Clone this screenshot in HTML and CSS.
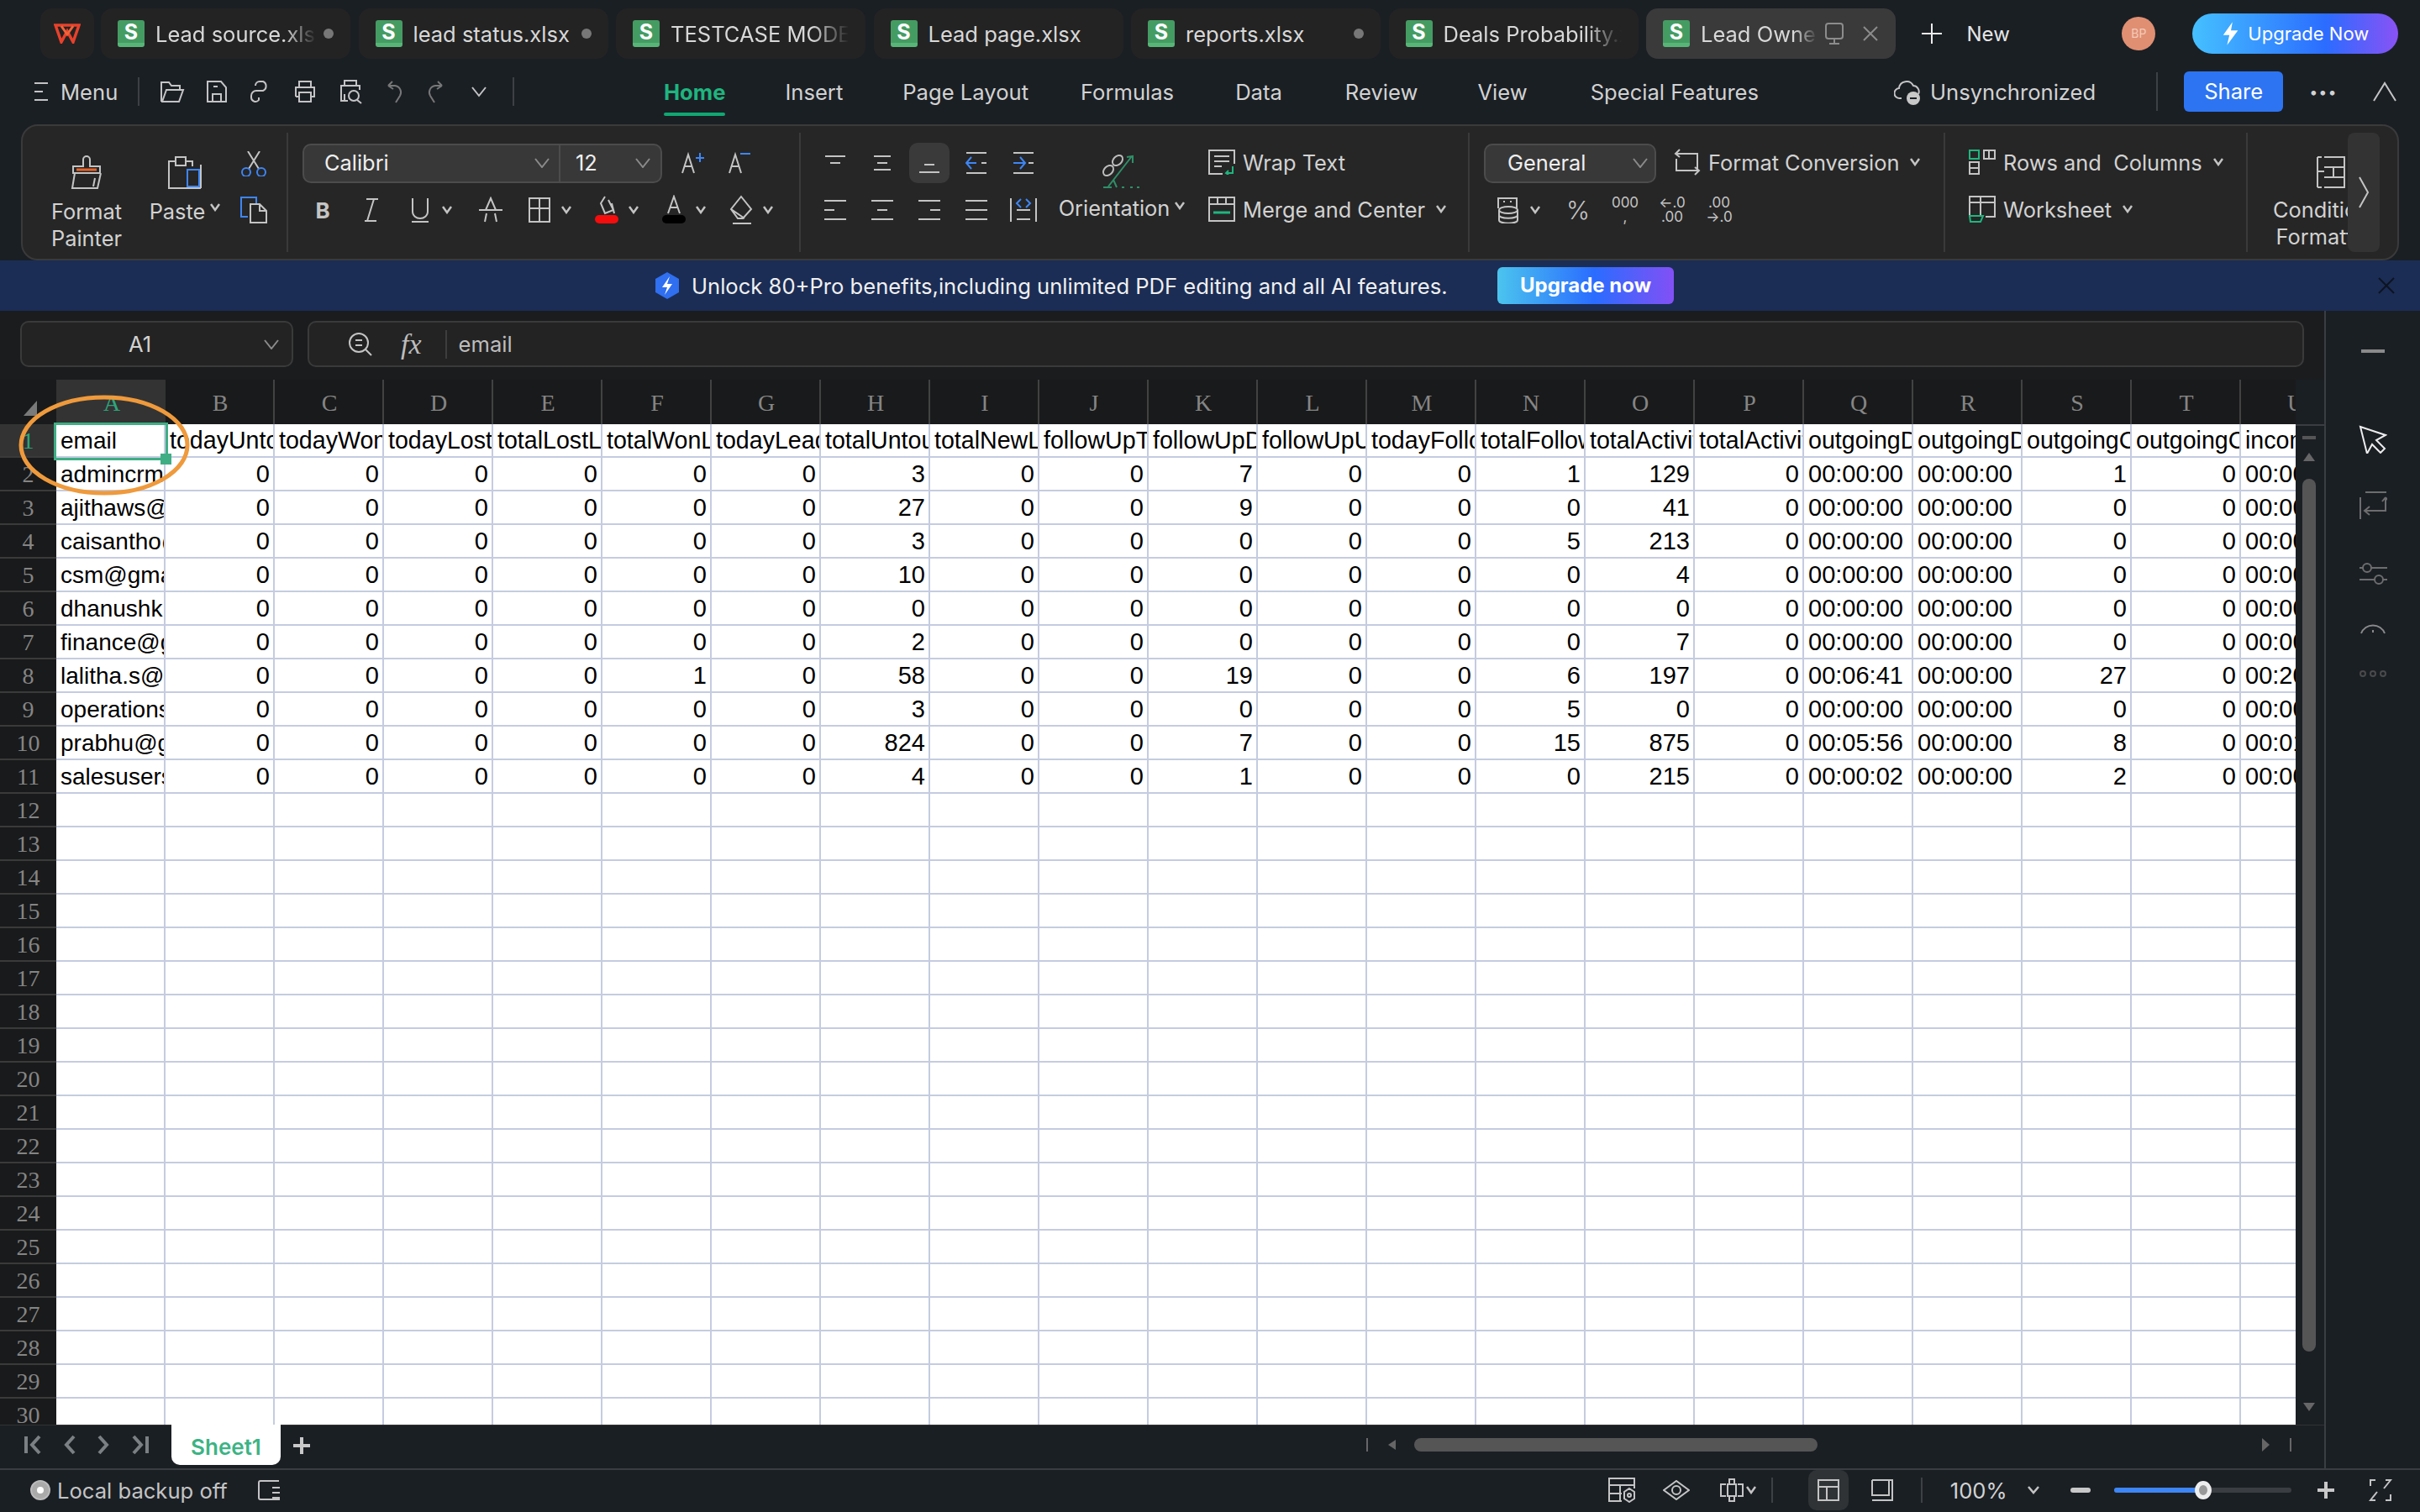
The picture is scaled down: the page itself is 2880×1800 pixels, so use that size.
FILE: index.html
```html
<!DOCTYPE html>
<html lang="en">

<head>
    <meta charset="utf-8">
    <title>Lead Owner.xlsx</title>
    <link rel="stylesheet" href="styles.css">
</head>

<body>

    <!-- file tabs -->
    <header class="tabbar">
        <div class="tab logo">
            <svg width="32" height="24" viewBox="0 0 32 24" fill="none"><path d="M2 2h28l-7 20-7-13-7 13z" stroke="#e8412b" stroke-width="3.5"/><path d="M9 3l7 10 7-10" stroke="#f0643a" stroke-width="3"/></svg>
        </div>
        <div class="tab"><span class="sicon">S</span><span class="tname fade">Lead source.xlsx</span><i class="dot"></i></div>
        <div class="tab"><span class="sicon">S</span><span class="tname">lead status.xlsx</span><i class="dot"></i></div>
        <div class="tab"><span class="sicon">S</span><span class="tname fade">TESTCASE MODEL</span></div>
        <div class="tab"><span class="sicon">S</span><span class="tname">Lead page.xlsx</span></div>
        <div class="tab"><span class="sicon">S</span><span class="tname">reports.xlsx</span><i class="dot"></i></div>
        <div class="tab"><span class="sicon">S</span><span class="tname fade">Deals Probability.xlsx</span></div>
        <div class="tab active">
            <span class="sicon">S</span><span class="tname fade">Lead Owner.xlsx</span>
            <svg class="ico dim" width="24" height="30" viewBox="0 0 24 30"><rect x="2" y="3" width="20" height="18" rx="3"/><path d="M12 21v5M6 27h12"/></svg>
            <svg class="ico dim closex" width="20" height="20" viewBox="0 0 20 20"><path d="M2 2l16 16M18 2L2 18"/></svg>
        </div>
        <div class="newtab">
            <svg class="ico bright" width="26" height="26" viewBox="0 0 26 26"><path d="M13 1v24M1 13h24"/></svg>
            <span>New</span>
        </div>
        <div class="avatar">BP</div>
        <div class="upgrade">
            <svg width="24" height="30" viewBox="0 0 26 30"><path d="M15 0L3 17h8l-3 13 14-19h-9z" fill="#fff"/></svg>
            <span>Upgrade Now</span>
        </div>
    </header>

    <!-- menu row -->
    <div class="menurow">
        <div class="quick">
            <svg class="ico" width="18" height="24" viewBox="0 0 18 24"><path d="M1 2h16M1 12h10M1 22h16"/></svg>
            <span class="menulabel">Menu</span>
            <i class="vsep"></i>
            <svg class="ico" width="30" height="28" viewBox="0 0 30 28"><path d="M2 26V3h9l3 4h10v5M2 26h21l5-14H8L3 26"/></svg>
            <svg class="ico" width="28" height="28" viewBox="0 0 28 28"><path d="M3 2h16l6 7v17H3zM9 26v-9h10v9M10 8h5"/></svg>
            <svg class="ico" width="28" height="28" viewBox="0 0 28 28"><path d="M12 13h5a6 6 0 000-11h-4a5 5 0 00-5 5M12 13H9a6 6 0 00-6 6v2a5 5 0 009 3v-3"/></svg>
            <svg class="ico" width="30" height="28" viewBox="0 0 30 28"><path d="M8 9V2h14v7M4 20V9h22v11h-4M8 20H4M8 15h14v11H8z"/></svg>
            <svg class="ico" width="32" height="30" viewBox="0 0 32 30"><path d="M8 8V2h14v6M12 26H4V8h22v5M8 18v8"/><circle cx="19" cy="20" r="6"/><path d="M23 25l5 4"/></svg>
            <svg class="ico faint" width="24" height="28" viewBox="0 0 24 28"><path d="M4 7l5-5M4 7l6 4M5 7h7a8 8 0 016 12l-5 8"/></svg>
            <svg class="ico faint" width="24" height="28" viewBox="0 0 24 28"><path d="M20 7l-5-5M20 7l-6 4M19 7h-7a8 8 0 00-6 12l5 8"/></svg>
            <svg class="ico qchev" width="20" height="14" viewBox="0 0 20 14"><path d="M2 2l8 10 8-10"/></svg>
            <i class="vsep qend"></i>
        </div>
        <nav class="ribbontabs">
            <span class="current">Home</span>
            <span>Insert</span>
            <span>Page Layout</span>
            <span>Formulas</span>
            <span>Data</span>
            <span>Review</span>
            <span>View</span>
            <span>Special Features</span>
        </nav>
        <div class="syncbox">
            <svg class="ico" width="34" height="36" viewBox="0 0 34 36"><path d="M9 26H7a6 6 0 01-1-12 9 9 0 0117-3 7 7 0 016 10"/><circle cx="23" cy="26" r="8" fill="#c8c8c8" stroke="none"/><path d="M19 26h8" stroke="#1a1f24"/></svg>
            <span>Unsynchronized</span>
            <i class="vsep tall"></i>
            <div class="share">Share</div>
            <span class="more">&bull;&bull;&bull;</span>
            <svg class="ico" width="30" height="26" viewBox="0 0 30 26"><path d="M2 24L15 3l13 21"/></svg>
        </div>
    </div>

    <!-- ribbon -->
    <section class="ribbon">
        <div class="group g1">
            <div class="bigbtn painter">
                <svg class="ico" width="40" height="42" viewBox="0 0 40 42"><path d="M16 14V6a4 4 0 018 0v8h12v8H4v-8zM6 22l-3 18h30l4-18M30 28l-2 10"/><path d="M8 18h24" stroke="#e8652a" stroke-width="3"/></svg>
                <span>Format<br>Painter</span>
            </div>
            <div class="bigbtn paste">
                <svg class="ico" width="42" height="42" viewBox="0 0 42 42"><path d="M14 40H2V8h8V3h12v5h8v6M10 8v5h12V8M14 40h26M40 40V12"/><rect x="24" y="18" width="14" height="20" stroke="#3e86f5"/></svg>
                <span class="withchev">Paste<svg class="chv" width="12" height="10" viewBox="0 0 12 10"><path d="M1 1l5 7 5-7"/></svg></span>
            </div>
            <div class="smallcol">
                <svg class="ico" width="34" height="30" viewBox="0 0 34 30"><path d="M10 0l13 21M24 0L11 21"/><g stroke="#3e86f5"><circle cx="8" cy="25" r="5"/><circle cx="26" cy="25" r="5"/></g></svg>
                <svg class="ico" width="34" height="32" viewBox="0 0 34 32"><path d="M10 24H2V1h18v8" stroke="#3e86f5"/><path d="M13 9h11l8 8v14H13zM24 9v8h8"/></svg>
            </div>
        </div>

        <div class="group g2">
            <div class="r1">
                <div class="combo fontcombo">
                    <span class="cname">Calibri</span>
                    <svg class="chvbig" width="18" height="12" viewBox="0 0 18 12"><path d="M1 1l8 10 8-10"/></svg>
                    <span class="csize">12</span>
                    <svg class="chvbig" width="18" height="12" viewBox="0 0 18 12"><path d="M1 1l8 10 8-10"/></svg>
                </div>
                <div class="aa">
                    <svg class="ico" width="30" height="28" viewBox="0 0 30 28"><path d="M2 26L9 4l7 22M5 18h8"/><path d="M18 8h10M23 2v11" stroke="#3e86f5"/></svg>
                    <svg class="ico" width="30" height="28" viewBox="0 0 30 28"><path d="M2 26L9 4l7 22M5 18h8"/><path d="M15 3h12" stroke="#3e86f5"/></svg>
                </div>
            </div>
            <div class="r2 fontrow">
                <span class="ib40 boldb">B</span>
                <svg class="ib40 ico" width="40" height="32" viewBox="0 0 40 32"><path d="M14 3h14M12 29h14M23 3l-8 26"/></svg>
                <div class="dd">
                    <svg class="ib40 ico" width="40" height="32" viewBox="0 0 40 32"><path d="M11 2v16a9 8 0 0018 0V2M10 30h20"/></svg>
                    <svg class="chv" width="12" height="10" viewBox="0 0 12 10"><path d="M1 1l5 7 5-7"/></svg>
                </div>
                <svg class="ib40 ico strike" width="40" height="32" viewBox="0 0 40 32"><path d="M14 16l6-14 6 14M13 30l2-10M27 30l-2-10M6 16h28"/></svg>
                <div class="dd">
                    <svg class="ib40 ico" width="40" height="32" viewBox="0 0 40 32"><path d="M8 2h24v28H8zM20 2v28M8 14h24"/></svg>
                    <svg class="chv" width="12" height="10" viewBox="0 0 12 10"><path d="M1 1l5 7 5-7"/></svg>
                </div>
                <div class="dd">
                    <svg class="ib40 ico" width="40" height="36" viewBox="0 0 40 36"><path d="M18 2l-5 8 5 12 10-4-6-12M26 10l3 12"/><rect x="6" y="24" width="28" height="10" rx="5" fill="#f50d0d" stroke="none"/></svg>
                    <svg class="chv" width="12" height="10" viewBox="0 0 12 10"><path d="M1 1l5 7 5-7"/></svg>
                </div>
                <div class="dd">
                    <svg class="ib40 ico" width="40" height="36" viewBox="0 0 40 36"><path d="M13 22l7-20 7 20M15 15h10"/><rect x="6" y="24" width="28" height="10" rx="5" fill="#000" stroke="none"/></svg>
                    <svg class="chv" width="12" height="10" viewBox="0 0 12 10"><path d="M1 1l5 7 5-7"/></svg>
                </div>
                <div class="dd">
                    <svg class="ib40 ico" width="40" height="36" viewBox="0 0 40 36"><path d="M20 2l12 15-10 11h-6L8 17zM8 17l16 11M10 34h22"/></svg>
                    <svg class="chv" width="12" height="10" viewBox="0 0 12 10"><path d="M1 1l5 7 5-7"/></svg>
                </div>
            </div>
        </div>

        <div class="group g3">
            <div class="aligngrid">
                <div class="ib"><svg class="ico" width="26" height="26" viewBox="0 0 26 26"><path d="M1 5h24M7 13h12"/></svg></div>
                <div class="ib"><svg class="ico" width="26" height="26" viewBox="0 0 26 26"><path d="M3 5h20M7 13h12M3 21h20"/></svg></div>
                <div class="ib on"><svg class="ico" width="26" height="26" viewBox="0 0 26 26"><path d="M7 15h12M1 24h24"/></svg></div>
                <div class="ib"><svg class="ico" width="28" height="28" viewBox="0 0 28 28"><path d="M2 2h24M2 26h24M20 14h6"/><path d="M14 14H2M8 7l-6 7 6 7" stroke="#3e86f5"/></svg></div>
                <div class="ib"><svg class="ico" width="28" height="28" viewBox="0 0 28 28"><path d="M2 2h24M2 26h24M20 14h6"/><path d="M2 14h14M10 7l6 7-6 7" stroke="#3e86f5"/></svg></div>
                <div class="ib"><svg class="ico" width="28" height="26" viewBox="0 0 28 26"><path d="M1 2h26M1 13h12M1 24h26"/></svg></div>
                <div class="ib"><svg class="ico" width="28" height="26" viewBox="0 0 28 26"><path d="M1 2h26M8 13h12M1 24h26"/></svg></div>
                <div class="ib"><svg class="ico" width="28" height="26" viewBox="0 0 28 26"><path d="M1 2h26M15 13h12M1 24h26"/></svg></div>
                <div class="ib"><svg class="ico" width="28" height="26" viewBox="0 0 28 26"><path d="M1 2h26M1 13h26M1 24h26"/></svg></div>
                <div class="ib"><svg class="ico" width="34" height="30" viewBox="0 0 34 30"><path d="M2 1v28M32 1v28M9 15h16M9 26h16"/><path d="M14 2l-5 5 5 5M20 2l5 5-5 5" stroke="#3e86f5"/></svg></div>
            </div>
            <div class="bigbtn orient">
                <svg width="48" height="44" viewBox="0 0 48 44" fill="none" stroke="#bdbdbd" stroke-width="2"><ellipse cx="19" cy="9" rx="5" ry="7" transform="rotate(45 19 9)"/><ellipse cx="8" cy="21" rx="5" ry="7" transform="rotate(45 8 21)"/><g stroke="#2f8f68"><path d="M8 40L36 4M30 5l7-1v8M2 41h10M14 32l4 9M24 41h3M34 41h3M42 41h3"/></g></svg>
                <span class="withchev">Orientation<svg class="chv" width="12" height="10" viewBox="0 0 12 10"><path d="M1 1l5 7 5-7"/></svg></span>
            </div>
            <div class="textcol">
                <div class="tbtn">
                    <svg class="ico" width="32" height="30" viewBox="0 0 32 30"><path d="M31 17V1H1v28h16M7 8h18M7 14h18M7 20h9"/><path d="M29 20v8h-8M24 25l-3 3 3 2" stroke="#1fb57f"/></svg>
                    <span>Wrap Text</span>
                </div>
                <div class="tbtn">
                    <svg class="ico" width="32" height="30" viewBox="0 0 32 30"><path d="M1 1h30v28H1zM1 9h30M11 1v8M21 1v8"/><path d="M6 19h20" stroke="#1fb57f" stroke-width="3"/></svg>
                    <span>Merge and Center</span>
                    <svg class="chv" width="12" height="10" viewBox="0 0 12 10"><path d="M1 1l5 7 5-7"/></svg>
                </div>
            </div>
        </div>

        <div class="group g4">
            <div class="r1">
                <div class="combo gencombo">
                    <span class="cname">General</span>
                    <svg class="chvbig" width="18" height="12" viewBox="0 0 18 12"><path d="M1 1l8 10 8-10"/></svg>
                </div>
                <div class="tbtn fconv">
                    <svg class="ico" width="32" height="32" viewBox="0 0 32 32"><path d="M7 1L2 6l5 4M2 6h26v20M25 31l5-5-5-4M30 26H3V12"/></svg>
                    <span>Format Conversion</span>
                    <svg class="chv" width="12" height="10" viewBox="0 0 12 10"><path d="M1 1l5 7 5-7"/></svg>
                </div>
            </div>
            <div class="r2 numrow">
                <div class="dd">
                    <svg class="ib40 ico" width="40" height="32" viewBox="0 0 40 32"><path d="M8 14V2h22v12M14 6h2M22 6h2"/><ellipse cx="20" cy="16" rx="11" ry="4"/><path d="M9 16v12c0 5 22 5 22 0V16M9 22c0 5 22 5 22 0"/></svg>
                    <svg class="chv" width="12" height="10" viewBox="0 0 12 10"><path d="M1 1l5 7 5-7"/></svg>
                </div>
                <span class="ib numglyph pct">%</span>
                <span class="ib numglyph thou">000<br>,</span>
                <span class="ib numglyph dec">&larr;.0<br>.00</span>
                <span class="ib numglyph dec">.00<br>&rarr;.0</span>
            </div>
        </div>

        <div class="group g5">
            <div class="tbtn">
                <svg class="ico" width="32" height="30" viewBox="0 0 32 30"><rect x="1" y="1" width="11" height="10" stroke="#1fb57f"/><path d="M18 1h13v10H18zM24 1v10M1 15h11v14H1zM1 22h11"/></svg>
                <span>Rows and&nbsp; Columns</span>
                <svg class="chv" width="12" height="10" viewBox="0 0 12 10"><path d="M1 1l5 7 5-7"/></svg>
            </div>
            <div class="tbtn">
                <svg class="ico" width="32" height="32" viewBox="0 0 32 32"><path d="M14 24H1V1h30v24H20M1 8h30M14 1v23"/><path d="M1 24h16l-3 7H2z" stroke="#1fb57f"/></svg>
                <span>Worksheet</span>
                <svg class="chv" width="12" height="10" viewBox="0 0 12 10"><path d="M1 1l5 7 5-7"/></svg>
            </div>
        </div>

        <div class="group g6">
            <div class="bigbtn condfmt">
                <svg class="ico condicon" width="34" height="38" viewBox="0 0 34 38"><path d="M9 1h24v36H9M9 13h24M9 25h24M20 13v12M1 1h5M1 37h5M1 1v36M1 18h8"/></svg>
                <span>Conditional<br>Formatting</span>
            </div>
            <div class="ribbonmore">
                <svg class="ico" width="14" height="40" viewBox="0 0 14 40"><path d="M2 2l10 18L2 38"/></svg>
            </div>
        </div>
    </section>

    <!-- promo banner -->
    <div class="promo">
        <svg width="30" height="32" viewBox="0 0 30 32"><path d="M15 0l14 8v16l-14 8-14-8V8z" fill="#2f6ff0"/><path d="M18 5L9 18h6l-3 9 9-13h-6z" fill="#fff"/></svg>
        <span class="promotext">Unlock 80+Pro benefits,including unlimited PDF editing and all AI features.</span>
        <span class="promobtn">Upgrade now</span>
        <svg class="promoclose" width="20" height="20" viewBox="0 0 20 20"><path d="M1 1l18 18M19 1L1 19" stroke="#0d1420" stroke-width="2"/></svg>
    </div>

    <div class="workspace">
        <div class="bookpane">

            <!-- name box + formula bar -->
            <div class="formularow">
                <div class="namebox">
                    <span>A1</span>
                    <svg class="chvbig" width="18" height="12" viewBox="0 0 18 12"><path d="M1 1l8 10 8-10"/></svg>
                </div>
                <div class="formulabox">
                    <svg class="ico" width="30" height="30" viewBox="0 0 30 30"><circle cx="13" cy="13" r="11"/><path d="M9 10h8M9 16h8M21 21l7 7"/></svg>
                    <span class="fx">fx</span>
                    <i class="fxsep"></i>
                    <span class="fval">email</span>
                </div>
            </div>

            <!-- column letters -->
            <div class="colhead">
                <div class="corner"><svg width="18" height="20" viewBox="0 0 18 20"><path d="M17 1v17a1 1 0 01-1 1H1z" fill="#7a7a7a"/></svg></div>
                <div class="letters">
                    <span class="sel">A</span><span>B</span><span>C</span><span>D</span><span>E</span><span>F</span><span>G</span><span>H</span><span>I</span><span>J</span><span>K</span><span>L</span><span>M</span><span>N</span><span>O</span><span>P</span><span>Q</span><span>R</span><span>S</span><span>T</span><span>U</span>
                </div>
                <div class="vsfill"></div>
            </div>

            <div class="sheetarea">
                <div class="rownums">
                    <span class="sel">1</span><span>2</span><span>3</span><span>4</span><span>5</span><span>6</span><span>7</span><span>8</span><span>9</span><span>10</span><span>11</span><span>12</span><span>13</span><span>14</span><span>15</span><span>16</span><span>17</span><span>18</span><span>19</span><span>20</span><span>21</span><span>22</span><span>23</span><span>24</span><span>25</span><span>26</span><span>27</span><span>28</span><span>29</span><span>30</span>
                </div>

                <div class="cells">
                    <table>
                        <tr class="heads"><td>email</td><td>todayUntouched</td><td>todayWonLeads</td><td>todayLostLeads</td><td>totalLostLeads</td><td>totalWonLeads</td><td>todayLeads</td><td>totalUntouched</td><td>totalNewLeads</td><td>followUpToday</td><td>followUpDone</td><td>followUpUpcoming</td><td>todayFollowUp</td><td>totalFollowUp</td><td>totalActivities</td><td>totalActivities</td><td>outgoingDuration</td><td>outgoingDuration</td><td>outgoingCount</td><td>outgoingCount</td><td>incoming</td></tr>
                        <tr><td class="l">admincrm@gmail.com</td><td>0</td><td>0</td><td>0</td><td>0</td><td>0</td><td>0</td><td>3</td><td>0</td><td>0</td><td>7</td><td>0</td><td>0</td><td>1</td><td>129</td><td>0</td><td class="l">00:00:00</td><td class="l">00:00:00</td><td>1</td><td>0</td><td class="l">00:00:00</td></tr>
                        <tr><td class="l">ajithaws@gmail.com</td><td>0</td><td>0</td><td>0</td><td>0</td><td>0</td><td>0</td><td>27</td><td>0</td><td>0</td><td>9</td><td>0</td><td>0</td><td>0</td><td>41</td><td>0</td><td class="l">00:00:00</td><td class="l">00:00:00</td><td>0</td><td>0</td><td class="l">00:00:00</td></tr>
                        <tr><td class="l">caisantho@gmail.com</td><td>0</td><td>0</td><td>0</td><td>0</td><td>0</td><td>0</td><td>3</td><td>0</td><td>0</td><td>0</td><td>0</td><td>0</td><td>5</td><td>213</td><td>0</td><td class="l">00:00:00</td><td class="l">00:00:00</td><td>0</td><td>0</td><td class="l">00:00:00</td></tr>
                        <tr><td class="l">csm@gmail.com</td><td>0</td><td>0</td><td>0</td><td>0</td><td>0</td><td>0</td><td>10</td><td>0</td><td>0</td><td>0</td><td>0</td><td>0</td><td>0</td><td>4</td><td>0</td><td class="l">00:00:00</td><td class="l">00:00:00</td><td>0</td><td>0</td><td class="l">00:00:00</td></tr>
                        <tr><td class="l">dhanushk@gmail.com</td><td>0</td><td>0</td><td>0</td><td>0</td><td>0</td><td>0</td><td>0</td><td>0</td><td>0</td><td>0</td><td>0</td><td>0</td><td>0</td><td>0</td><td>0</td><td class="l">00:00:00</td><td class="l">00:00:00</td><td>0</td><td>0</td><td class="l">00:00:00</td></tr>
                        <tr><td class="l">finance@gmail.com</td><td>0</td><td>0</td><td>0</td><td>0</td><td>0</td><td>0</td><td>2</td><td>0</td><td>0</td><td>0</td><td>0</td><td>0</td><td>0</td><td>7</td><td>0</td><td class="l">00:00:00</td><td class="l">00:00:00</td><td>0</td><td>0</td><td class="l">00:00:00</td></tr>
                        <tr><td class="l">lalitha.s@gmail.com</td><td>0</td><td>0</td><td>0</td><td>0</td><td>1</td><td>0</td><td>58</td><td>0</td><td>0</td><td>19</td><td>0</td><td>0</td><td>6</td><td>197</td><td>0</td><td class="l">00:06:41</td><td class="l">00:00:00</td><td>27</td><td>0</td><td class="l">00:20:00</td></tr>
                        <tr><td class="l">operations@gmail.com</td><td>0</td><td>0</td><td>0</td><td>0</td><td>0</td><td>0</td><td>3</td><td>0</td><td>0</td><td>0</td><td>0</td><td>0</td><td>5</td><td>0</td><td>0</td><td class="l">00:00:00</td><td class="l">00:00:00</td><td>0</td><td>0</td><td class="l">00:00:00</td></tr>
                        <tr><td class="l">prabhu@gmail.com</td><td>0</td><td>0</td><td>0</td><td>0</td><td>0</td><td>0</td><td>824</td><td>0</td><td>0</td><td>7</td><td>0</td><td>0</td><td>15</td><td>875</td><td>0</td><td class="l">00:05:56</td><td class="l">00:00:00</td><td>8</td><td>0</td><td class="l">00:01:00</td></tr>
                        <tr><td class="l">salesusers@gmail.com</td><td>0</td><td>0</td><td>0</td><td>0</td><td>0</td><td>0</td><td>4</td><td>0</td><td>0</td><td>1</td><td>0</td><td>0</td><td>0</td><td>215</td><td>0</td><td class="l">00:00:02</td><td class="l">00:00:00</td><td>2</td><td>0</td><td class="l">00:00:00</td></tr>
                    </table>
                    <div class="emptyrows"></div>
                </div>

                <div class="vscroll">
                    <i class="vs-dash"></i>
                    <i class="vs-up"></i>
                    <i class="vs-thumb"></i>
                    <i class="vs-down"></i>
                </div>

                <!-- A1 cursor and the hand-drawn ring sit on top of the grid -->
                <div class="cursor"><i class="handle"></i></div>
                <svg class="ring" width="206" height="122" viewBox="0 0 206 122" fill="none"><ellipse cx="103" cy="61" rx="99" ry="57" stroke="#ef9a3c" stroke-width="5"/></svg>
            </div>

            <!-- sheet tabs -->
            <div class="sheetbar">
                <div class="sheetnav">
                    <svg width="22" height="24" viewBox="0 0 22 24" fill="none" stroke="#7b8085" stroke-width="4"><path d="M3 2v20M19 2l-9 10 9 10"/></svg>
                    <svg width="14" height="24" viewBox="0 0 14 24" fill="none" stroke="#7b8085" stroke-width="4"><path d="M12 2l-9 10 9 10"/></svg>
                    <svg width="14" height="24" viewBox="0 0 14 24" fill="none" stroke="#7b8085" stroke-width="4"><path d="M2 2l9 10-9 10"/></svg>
                    <svg width="22" height="24" viewBox="0 0 22 24" fill="none" stroke="#7b8085" stroke-width="4"><path d="M19 2v20M3 2l9 10-9 10"/></svg>
                </div>
                <div class="sheettab">Sheet1</div>
                <svg class="addsheet" width="24" height="24" viewBox="0 0 24 24" fill="none" stroke="#c8c8c8" stroke-width="4"><path d="M12 2v20M2 12h20"/></svg>
                <div class="hscroll">
                    <i class="hs-bar"></i>
                    <i class="hs-left"></i>
                    <i class="hs-thumb"></i>
                    <i class="hs-right"></i>
                    <i class="hs-bar"></i>
                </div>
            </div>
        </div>

        <!-- right side rail -->
        <aside class="rail">
            <i class="railminus"></i>
            <svg class="ico bright" width="34" height="34" viewBox="0 0 34 34"><path d="M2 2l30 10-11 6 10 10-5 5-10-10-6 11z"/></svg>
            <svg class="ico railfaint" width="34" height="34" viewBox="0 0 34 34"><path d="M8 2h25M2 8v26M32 8v16H8M13 19l-6 5 6 5M32 8l-4 5M32 8l4 5"/></svg>
            <svg class="ico railfaint sliders" width="34" height="28" viewBox="0 0 34 28"><circle cx="10" cy="7" r="5"/><circle cx="24" cy="21" r="5"/><path d="M15 7h19M1 7h4M1 21h18M29 21h5"/></svg>
            <svg class="ico railarc" width="30" height="12" viewBox="0 0 30 12"><path d="M1 11a15 15 0 0128 0M15 7v3"/></svg>
            <svg class="ico raildots" width="34" height="10" viewBox="0 0 34 10"><circle cx="5" cy="5" r="3"/><circle cx="17" cy="5" r="3"/><circle cx="29" cy="5" r="3"/></svg>
        </aside>
    </div>

    <!-- status bar -->
    <footer class="statusbar">
        <div class="radio"><i></i></div>
        <span class="backup">Local backup off</span>
        <svg class="ico docicon" width="26" height="24" viewBox="0 0 26 24"><path d="M25 1H3a2 2 0 00-2 2v18a2 2 0 002 2h24M17 9h9M17 15h9M17 21h9"/></svg>
        <div class="statusright">
            <svg class="ico" width="32" height="30" viewBox="0 0 32 30"><path d="M16 28H1V1h30v12M1 9h30M1 19h15M14 9v19"/><path d="M25 13l6 4v8l-6 4-6-4v-8z"/><circle cx="25" cy="21" r="2"/></svg>
            <svg class="ico" width="32" height="24" viewBox="0 0 32 24"><path d="M1 12L16 1l15 11-15 11z"/><circle cx="16" cy="12" r="5"/></svg>
            <div class="splitview">
                <svg class="ico" width="28" height="28" viewBox="0 0 28 28"><path d="M11 7V1h6v6M11 21v6h6v-6M7 7H1v14h6M21 7h6v14h-6M9 7h10v14H9z"/></svg>
                <svg class="chv" width="12" height="10" viewBox="0 0 12 10"><path d="M1 1l5 7 5-7"/></svg>
            </div>
            <i class="vsep short"></i>
            <div class="viewbtn on"><svg class="ico" width="28" height="26" viewBox="0 0 28 26"><path d="M2 1h24v24H2zM2 9h24M12 9v16"/></svg></div>
            <div class="viewbtn"><svg class="ico" width="28" height="26" viewBox="0 0 28 26"><path d="M2 1h24v24H2M2 1v18h20V1"/></svg></div>
            <i class="vsep short"></i>
            <span class="zoomval">100%</span>
            <svg class="chv zoomchv" width="14" height="10" viewBox="0 0 14 10"><path d="M1 1l6 7 6-7"/></svg>
            <i class="zminus"></i>
            <div class="slider"><i class="sl-blue"></i><i class="sl-knob"></i></div>
            <svg class="zplus" width="22" height="22" viewBox="0 0 22 22" fill="none" stroke="#c8c8c8" stroke-width="4"><path d="M11 1v20M1 11h20"/></svg>
            <svg class="ico fitscreen" width="28" height="28" viewBox="0 0 28 28"><path d="M2 9V2h6M26 19v7h-6M20 2h6l-8 10M8 26H2l8-10"/></svg>
        </div>
    </footer>

</body>

</html>
```

FILE: styles.css
```css
* {
    box-sizing: border-box;
}

html, body {
    margin: 0;
    padding: 0;
}

body {
    width: 2880px;
    height: 1800px;
    overflow: hidden;
    display: flex;
    flex-direction: column;
    background-color: #1a1f24;
    color: #d2d2d2;
    font-family: "Inter", "Liberation Sans", sans-serif;
    font-size: 25.6px;
}

i {
    display: block;
}

.ico {
    fill: none;
    stroke: #c4c4c4;
    stroke-width: 2;
    flex: none;
}

.ico.dim {
    stroke: #8c8c8c;
}

.ico.faint {
    stroke: #777;
}

.ico.bright {
    stroke: #ececec;
}

.chv,
.chvbig {
    fill: none;
    flex: none;
}

.chv {
    stroke: #c4c4c4;
    stroke-width: 2.5;
}

.chvbig {
    stroke: #8b8b8b;
    stroke-width: 2;
}

/* file tabs */
.tabbar {
    height: 80px;
    flex: none;
    display: flex;
    align-items: flex-start;
    padding: 10px 0 0 48px;
    gap: 9.5px;
}

.tab {
    width: 297px;
    height: 60px;
    flex: none;
    border-radius: 14px;
    background-color: #232323;
    display: flex;
    align-items: center;
    padding: 0 20px;
    white-space: nowrap;
    color: #d8d8d8;
    font-size: 25.5px;
}

.tab.logo {
    width: 64px;
    margin-right: -1.5px;
    justify-content: center;
    padding: 0;
}

.tab.active {
    background-color: #3a3a3a;
}

.sicon {
    width: 32px;
    height: 32px;
    flex: none;
    border-radius: 3px;
    background: linear-gradient(#459c63 85%, #57b578 85%);
    color: #fff;
    font-weight: 700;
    font-size: 25px;
    line-height: 28px;
    text-align: center;
    margin-right: 13px;
}

.tname {
    flex: 1;
    overflow: hidden;
}

.tname.fade {
    -webkit-mask-image: linear-gradient(90deg, #000 80%, transparent);
    mask-image: linear-gradient(90deg, #000 80%, transparent);
}

.dot {
    width: 12px;
    height: 12px;
    border-radius: 50%;
    background-color: #777;
    flex: none;
    margin-left: 8px;
}

.tab .ico.dim {
    margin-left: 8px;
}

.tab .ico.closex {
    margin-left: 21px;
}

.newtab {
    display: flex;
    align-items: center;
    height: 60px;
    margin-left: 20px;
    gap: 29px;
    font-size: 24px;
    color: #e6e6e6;
}

.avatar {
    width: 40px;
    height: 40px;
    margin: 10px 0 0 124px;
    border-radius: 50%;
    background-color: #e08f72;
    color: #f3cbbb;
    font-size: 14px;
    line-height: 40px;
    text-align: center;
}

.upgrade {
    width: 245px;
    height: 48px;
    flex: none;
    margin: 6px 0 0 34px;
    border-radius: 24px;
    background: linear-gradient(90deg, #45c0ff, #2b6cff 65%, #8a52f5);
    display: flex;
    align-items: center;
    justify-content: center;
    gap: 8px;
    color: #fff;
    font-size: 22px;
}

/* menu row */
.menurow {
    height: 68px;
    flex: none;
    display: flex;
    align-items: center;
    padding-bottom: 10px;
    white-space: nowrap;
}

.quick {
    width: 790px;
    flex: none;
    display: flex;
    align-items: center;
    padding-left: 40px;
    gap: 24px;
}

.menulabel {
    margin-left: -10px;
}

.qchev {
    margin-left: 6px;
}

.vsep {
    width: 2px;
    height: 34px;
    background-color: #3d4145;
    flex: none;
}

.vsep.qend {
    margin-left: 6px;
}

.vsep.tall {
    height: 46px;
    margin-left: 63px;
}

.ribbontabs {
    display: flex;
    gap: 71px;
    flex: none;
    position: relative;
}

/* the tabs are not evenly spaced in the app */
.ribbontabs span:nth-child(4) {
    margin-left: -9px;
}

.ribbontabs span:nth-child(5) {
    margin-left: 2px;
}

.ribbontabs span:nth-child(6) {
    margin-left: 4px;
}

.ribbontabs span:nth-child(8) {
    margin-left: 4px;
}

.ribbontabs .current {
    color: #1fb57f;
    font-weight: 700;
    position: relative;
}

.ribbontabs .current::after {
    content: "";
    position: absolute;
    left: 0;
    right: 0;
    bottom: -13px;
    height: 4px;
    border-radius: 2px;
    background-color: #10a873;
}

.syncbox {
    display: flex;
    align-items: center;
    margin-left: 161px;
    gap: 9px;
    flex: none;
}

.share {
    width: 118px;
    height: 48px;
    margin-left: 22px;
    border-radius: 6px;
    background-color: #2d74f2;
    color: #fff;
    line-height: 48px;
    text-align: center;
}

.more {
    font-size: 18px;
    letter-spacing: 1px;
    margin: 0 32px 0 22px;
}

/* ribbon */
.ribbon {
    height: 162px;
    flex: none;
    width: 2830px;
    margin-left: 25px;
    display: flex;
    padding: 8px 0;
    background-color: #262626;
    border: 2px solid #3a3a3a;
    border-radius: 20px;
    font-size: 25.4px;
}

.group {
    border-right: 2px solid #3a3a3a;
    padding-top: 12px;
    flex: none;
    position: relative;
}

.g1 {
    width: 316px;
    display: flex;
    padding: 26px 0 0 30px;
}

.g2 {
    width: 610px;
    padding-left: 17px;
}

.g3 {
    width: 796px;
    display: flex;
    padding-left: 13px;
}

.g4 {
    width: 566px;
    padding-left: 17px;
}

.g5 {
    width: 360px;
    padding: 12px 0 0 28px;
}

.g6 {
    flex: 1;
    border-right: 0;
    display: flex;
    padding: 0;
    overflow: hidden;
}

.r1,
.r2 {
    display: flex;
    align-items: center;
    height: 48px;
}

.r2 {
    margin-top: 8px;
}

.bigbtn {
    display: flex;
    flex-direction: column;
    align-items: center;
    text-align: center;
    line-height: 32px;
    white-space: nowrap;
}

.bigbtn svg:first-child {
    margin-bottom: 10px;
}

.painter {
    width: 92px;
    margin-right: 26px;
    flex: none;
}

.paste {
    width: 90px;
    margin-right: 20px;
    flex: none;
}

.withchev {
    display: flex;
    align-items: center;
    gap: 6px;
}

.smallcol {
    display: flex;
    flex-direction: column;
    gap: 24px;
    margin-top: -4px;
}

.combo {
    display: flex;
    align-items: center;
    height: 47px;
    background-color: #383838;
    border: 2px solid #4c4c4c;
    border-radius: 10px;
    color: #efefef;
}

.combo .cname {
    margin-top: -2px;
}

.fontcombo {
    width: 428px;
}

.fontcombo .cname {
    width: 274px;
    padding-left: 24px;
}

.fontcombo .chvbig:nth-of-type(1) {
    margin-right: 11px;
}

.fontcombo .csize {
    width: 91px;
    height: 100%;
    border-left: 2px solid #4c4c4c;
    padding-left: 18px;
    line-height: 41px;
}

.aa {
    display: flex;
    gap: 26px;
    margin-left: 22px;
}

.fontrow {
    gap: 18px;
    padding-left: 4px;
}

.ib40 {
    width: 40px;
    flex: none;
}

.boldb {
    text-align: center;
    font-weight: 700;
    font-size: 26px;
    color: #c4c4c4;
}

.dd {
    width: 62px;
    flex: none;
    display: flex;
    align-items: center;
    gap: 6px;
}

.strike {
    margin-left: 4px;
}

.aligngrid {
    display: grid;
    grid-template-columns: repeat(5, 56px);
    grid-auto-rows: 48px;
    row-gap: 8px;
    width: 280px;
    flex: none;
}

.ib {
    width: 56px;
    height: 48px;
    flex: none;
    display: flex;
    align-items: center;
    justify-content: center;
}

.aligngrid .on {
    width: 48px;
    margin-left: 4px;
    border-radius: 10px;
    background-color: #3a3a3a;
}

.orient {
    width: 172px;
    margin-left: 3px;
    padding-top: 12px;
    flex: none;
}

.orient svg:first-child {
    margin-bottom: 6px;
}

.textcol {
    margin-left: 17px;
    display: flex;
    flex-direction: column;
    gap: 8px;
}

.tbtn {
    display: flex;
    align-items: center;
    height: 48px;
    padding-bottom: 2px;
    gap: 9px;
    white-space: nowrap;
}

.tbtn .chv {
    margin-left: 4px;
}

.gencombo {
    width: 205px;
    justify-content: space-between;
    padding: 0 8px 0 26px;
}

.fconv {
    margin-left: 21px;
}

.numrow {
    padding-left: 9px;
}

.numrow .dd {
    margin-right: 13px;
}

.numglyph {
    flex-direction: column;
    font-size: 17px;
    line-height: 17px;
    text-align: center;
    color: #c4c4c4;
}

.numglyph.pct {
    font-size: 30px;
    font-weight: 300;
}

.g5 .tbtn + .tbtn {
    margin-top: 8px;
}

.condfmt {
    width: 89px;
    flex: none;
    overflow: hidden;
    margin-left: 30px;
    padding-top: 28px;
    align-items: flex-start;
}

.condfmt .condicon {
    margin-left: 52px;
    margin-bottom: 12px;
}

.ribbonmore {
    width: 38px;
    border-radius: 8px;
    background-color: #333;
    display: flex;
    align-items: center;
    justify-content: center;
    flex: none;
}

/* promo banner */
.promo {
    height: 60px;
    flex: none;
    background-color: #1b2d55;
    display: flex;
    align-items: center;
    padding-left: 779px;
    position: relative;
    color: #f0f0f0;
}

.promotext {
    margin-left: 14px;
    width: 959px;
    white-space: nowrap;
}

.promobtn {
    width: 210px;
    height: 44px;
    border-radius: 6px;
    background: linear-gradient(90deg, #4bc4ee, #2a6cff 55%, #8250f5);
    color: #fff;
    font-weight: 700;
    font-size: 24px;
    line-height: 44px;
    text-align: center;
}

.promoclose {
    position: absolute;
    right: 30px;
    top: 20px;
}

/* workspace */
.workspace {
    flex: 1;
    display: flex;
    min-height: 0;
    border-bottom: 2px solid #3a3e42;
}

.bookpane {
    width: 2766px;
    flex: none;
    display: flex;
    flex-direction: column;
}

.formularow {
    height: 82px;
    flex: none;
    display: flex;
    padding: 12px 24px 15px;
    gap: 17px;
    background-color: #1a1c1e;
}

.namebox,
.formulabox {
    height: 55px;
    background-color: #232323;
    border: 2px solid #3a3a3a;
    border-radius: 10px;
    display: flex;
    align-items: center;
}

.namebox {
    width: 325px;
    flex: none;
    padding-left: 127px;
    gap: 134px;
}

.formulabox {
    flex: 1;
    padding-left: 46px;
    color: #bdbdbd;
}

.fx {
    font-family: "Liberation Serif", serif;
    font-style: italic;
    font-size: 34px;
    margin-left: 33px;
}

.fxsep {
    width: 2px;
    height: 34px;
    background-color: #3d3d3d;
    margin: 0 14px 0 28px;
}

.colhead {
    height: 53px;
    flex: none;
    display: flex;
    background-color: #191a1b;
    font-family: "Liberation Serif", serif;
    font-size: 28px;
    color: #858585;
}

.corner {
    width: 67px;
    flex: none;
    padding: 19px 0 0 27px;
}

.letters {
    width: 2665px;
    flex: none;
    display: grid;
    grid-template-columns: repeat(21, 130px);
    overflow: hidden;
}

.letters span {
    border-right: 2px solid #424242;
    padding-left: 2px;
    text-align: center;
    line-height: 56px;
}

.letters .sel {
    background-color: #333;
    color: #2ea67c;
    border-right: 0;
}

.vsfill {
    flex: 1;
    background-color: #1a1f24;
}

.sheetarea {
    flex: 1;
    min-height: 0;
    display: flex;
    position: relative;
}

.rownums {
    width: 67px;
    flex: none;
    overflow: hidden;
    background-color: #191a1b;
    font-family: "Liberation Serif", serif;
    font-size: 28px;
    color: #858585;
    text-align: center;
}

.rownums span {
    display: block;
    height: 40px;
    line-height: 40px;
    border-bottom: 2px solid #3a3a3a;
}

.rownums .sel {
    background-color: #333;
    color: #2ea67c;
}

.cells {
    width: 2665px;
    flex: none;
    overflow: hidden;
    background-color: #fff;
}

.cells table {
    table-layout: fixed;
    width: 2730px;
    border-collapse: separate;
    border-spacing: 0;
}

.cells td {
    width: 130px;
    height: 40px;
    padding: 1px 4px 0 5px;
    border-right: 2px solid #c5cce0;
    border-bottom: 2px solid #c5cce0;
    overflow: hidden;
    white-space: nowrap;
    text-align: right;
    color: #000;
    font-family: "Liberation Sans", Arial, sans-serif;
    font-size: 29px;
    line-height: 37px;
}

.cells .heads td {
    font-size: 28.6px;
    text-align: left;
}

.cells td.l {
    text-align: left;
}

.cells td:first-child {
    font-size: 28px;
}

.emptyrows {
    height: 760px;
    background-image: linear-gradient(transparent 38px, #c5cce0 38px), linear-gradient(90deg, transparent 128px, #c5cce0 128px);
    background-size: 130px 40px;
}

.vscroll {
    flex: 1;
    background-color: #1a1f24;
    border-top: 2px solid #3a3e42;
    position: relative;
    overflow: hidden;
}

.vscroll i {
    position: absolute;
}

.vs-dash {
    left: 8px;
    top: 12px;
    width: 16px;
    height: 4px;
    background-color: #555;
}

.vs-up {
    left: 9px;
    top: 32px;
    border: 7px solid transparent;
    border-top: 0;
    border-bottom: 10px solid #666;
}

.vs-thumb {
    left: 8px;
    top: 63px;
    width: 16px;
    height: 1039px;
    border-radius: 8px;
    background-color: #555;
}

.vs-down {
    left: 9px;
    bottom: 16px;
    border: 7px solid transparent;
    border-bottom: 0;
    border-top: 10px solid #666;
}

.cursor {
    position: absolute;
    left: 64px;
    top: -2px;
    width: 136px;
    height: 45px;
    border: 3px solid #3fae85;
}

.handle {
    position: absolute;
    right: -7px;
    bottom: -8px;
    width: 13px;
    height: 13px;
    background-color: #3fae85;
}

.ring {
    position: absolute;
    left: 21px;
    top: -36px;
}

/* sheet tabs */
.sheetbar {
    height: 52px;
    flex: none;
    display: flex;
    align-items: flex-start;
    background-color: #1a1f24;
    border-top: 1px solid #333;
}

.sheetnav {
    display: flex;
    align-items: center;
    width: 204px;
    height: 46px;
    flex: none;
    padding-left: 28px;
    gap: 26px;
}

.sheettab {
    width: 130px;
    height: 48px;
    flex: none;
    margin-top: -1px;
    border-radius: 0 0 10px 10px;
    background-color: #fff;
    color: #3cb384;
    font-weight: 600;
    font-size: 26px;
    line-height: 54px;
    text-align: center;
}

.addsheet {
    margin: 12px 0 0 13px;
    flex: none;
}

.hscroll {
    display: flex;
    align-items: center;
    margin-left: 1255px;
    height: 46px;
    flex: none;
}

.hs-bar {
    width: 2px;
    height: 16px;
    background-color: #666;
    flex: none;
}

.hs-left {
    margin-left: 24px;
    border: 6px solid transparent;
    border-left: 0;
    border-right: 9px solid #666;
    flex: none;
}

.hs-thumb {
    width: 480px;
    height: 16px;
    margin: 0 529px 0 22px;
    border-radius: 8px;
    background-color: #555;
    flex: none;
}

.hs-right {
    border: 8px solid transparent;
    border-right: 0;
    border-left: 9px solid #666;
    margin-right: 24px;
    flex: none;
}

/* right rail */
.rail {
    flex: 1;
    border-left: 2px solid #3a3e42;
    display: flex;
    flex-direction: column;
    align-items: center;
}

.railminus {
    width: 28px;
    height: 4px;
    margin-top: 46px;
    background-color: #8a8a8a;
}

.rail .bright {
    margin-top: 86px;
}

.railfaint {
    stroke: #6d6d6d;
    margin-top: 44px;
}

.railfaint.sliders {
    margin-top: 51px;
}

.railarc {
    stroke: #8a8a8a;
    margin-top: 46px;
}

.raildots {
    stroke: #4a4a4a;
    margin-top: 42px;
}

/* status bar */
.statusbar {
    height: 50px;
    flex: none;
    display: flex;
    align-items: center;
    padding: 0 0 2px 36px;
    color: #c4c4c4;
}

.radio {
    width: 24px;
    height: 24px;
    flex: none;
    border-radius: 50%;
    background-color: #aaa;
    border: 2px solid #bbb;
    padding: 6px;
}

.radio i {
    width: 8px;
    height: 8px;
    border-radius: 50%;
    background-color: #fff;
}

.backup {
    margin-left: 8px;
    flex: none;
}

.docicon {
    margin-left: 36px;
}

.statusright {
    margin-left: 1581px;
    display: flex;
    align-items: center;
    height: 48px;
    flex: none;
}

.statusright > .ico:nth-child(2) {
    margin-left: 33px;
}

.splitview {
    display: flex;
    align-items: center;
    gap: 3px;
    margin-left: 36px;
}

.vsep.short {
    height: 30px;
    margin: 0 18px;
}

.viewbtn {
    width: 48px;
    height: 48px;
    flex: none;
    display: flex;
    align-items: center;
    justify-content: center;
    border-radius: 10px;
}

.viewbtn.on {
    margin-left: 24px;
    background-color: #2f3336;
}

.viewbtn + .viewbtn {
    margin: 0 4px 0 16px;
}

.zoomval {
    margin-left: 15px;
    color: #d2d2d2;
}

.zoomchv {
    margin-left: 24px;
}

.zminus {
    width: 24px;
    height: 6px;
    flex: none;
    border-radius: 3px;
    background-color: #c8c8c8;
    margin-left: 37px;
}

.slider {
    width: 211px;
    height: 6px;
    flex: none;
    margin-left: 28px;
    border-radius: 3px;
    background-color: #3a3e42;
    position: relative;
}

.sl-blue {
    width: 100px;
    height: 100%;
    border-radius: 3px;
    background-color: #3e86f5;
}

.sl-knob {
    position: absolute;
    left: 96px;
    top: -8px;
    width: 20px;
    height: 22px;
    border-radius: 50%;
    background-color: #999;
    border: 5px solid #eee;
}

.zplus {
    margin-left: 30px;
    flex: none;
}

.fitscreen {
    margin-left: 40px;
}
```
